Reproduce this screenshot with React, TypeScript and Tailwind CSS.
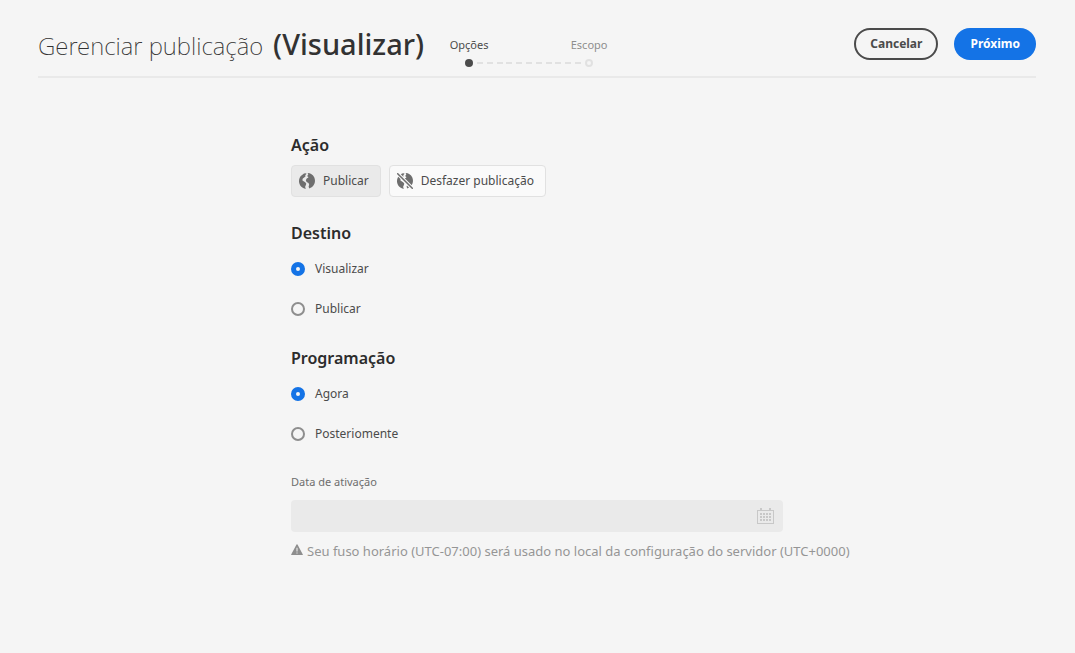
import { useId, useState, type ReactNode } from "react";

function Globe({ off = false }: { off?: boolean }) {
  const id = useId();
  return (
    <svg viewBox="0 0 16 16" className="size-4 shrink-0" aria-hidden="true">
      <defs>
        <mask id={id}>
          <rect width="16" height="16" fill="#fff" />
          {off && <path d="M-1 -1 L17 17" stroke="#000" strokeWidth="3.6" />}
        </mask>
      </defs>
      <g mask={`url(#${id})`} fill="#6e6e6e">
        <path d="M1.800 3 5 .6 6.500.2 7.600.7 6.200 2.300 6.600 3.300 5.200 4.600 3.800 5.600 3.300 7.300 4.600 8.200 6.300 9.200 7.300 10.800 6.800 12.300 6.200 13.400 6.300 14.600 6.800 15.900C3 15.400.3 12.500 0 8.800-.1 6.600.6 4.600 1.800 3z" />
        <path d="M8.600.1C11.500.2 14 1.900 15.200 4.300c.9 1.900 1 4 .4 5.900-.5 1.400-1.300 2.700-2.500 3.700L10.200 15.400 9.600 13.600 10.200 11.800 9.500 10 7.600 9 6.800 7.200 7.700 5.500 9.400 4.600 9 3.500 8 3.200 9.300 1.500z" />
      </g>
      {off && <path d="M.7.7 15.300 15.300" stroke="#6e6e6e" strokeWidth="1.500" strokeLinecap="round" />}
    </svg>
  );
}

function Calendar() {
  return (
    <svg viewBox="0 0 18 18" className="size-[18px]" fill="#c8c8c8" aria-hidden="true">
      <path fillRule="evenodd" d="M0 3h3V1h2v2h7V1h2v2h3v14H0zM1 4v12h15V4z" />
      {[6, 9, 12].map((y) =>
        [3, 6, 9, 12].map((x) => <rect key={`${x}-${y}`} x={x} y={y} width="2" height="2" />),
      )}
    </svg>
  );
}

function Warning() {
  return (
    <svg viewBox="0 0 12 12" className="mb-[2px] h-3 w-3 shrink-0" aria-hidden="true">
      <path d="M5.500.6a.6.6 0 0 1 1 0l5.200 9.600a.6.6 0 0 1-.5.900H.8a.6.6 0 0 1-.5-.900z" fill="#8e8e8e" />
      <path d="M5.500 3.700h1v3.700h-1zM5.500 8.400h1v1.200h-1z" fill="#f5f5f5" />
    </svg>
  );
}

function ActionButton({ selected, onClick, children, off }: { selected: boolean; onClick: () => void; children: ReactNode; off?: boolean }) {
  return (
    <button
      type="button"
      aria-pressed={selected}
      onClick={onClick}
      className={`flex h-8 items-center gap-2 rounded border border-[#e1e1e1] pr-[11px] pl-[7px] text-xs text-[#4b4b4b] ${selected ? "bg-[#eaeaea]" : "bg-[#fafafa]"}`}
    >
      <Globe off={off} />
      {children}
    </button>
  );
}

function RadioGroup({ title, name, options }: { title: string; name: string; options: string[] }) {
  return (
    <fieldset>
      <legend className="text-base leading-6 font-semibold text-[#2c2c2c]">{title}</legend>
      <div className="mt-1">
        {options.map((option, i) => (
          <label key={option} className="flex h-10 items-center gap-[10px] text-xs text-[#4b4b4b]">
            <input
              type="radio"
              name={name}
              defaultChecked={i === 0}
              className="size-[14px] appearance-none rounded-full border-2 border-[#8e8e8e] bg-[#f5f5f5] checked:border-[5px] checked:border-[#1473e6]"
            />
            {option}
          </label>
        ))}
      </div>
    </fieldset>
  );
}

export default function App() {
  const [action, setAction] = useState("publicar");
  return (
    <div className="min-h-screen bg-[#f5f5f5] pr-[39px] pl-[38px] font-['Noto_Sans',sans-serif]">
      <header className="flex h-[78px] items-start border-b-2 border-[#e9e9e9]">
        <h1 className="flex items-baseline gap-[10px] pt-6 leading-10 whitespace-nowrap text-[#323232]">
          <span className="text-2xl font-extralight">Gerenciar publicação</span>
          <span className="text-[29px] font-medium">(Visualizar)</span>
        </h1>
        <ol className="ml-[15px] flex pt-[37px] text-[11px] leading-4">
          <li className="flex w-[60px] flex-col items-center gap-[6px] text-[#4b4b4b]" aria-current="step">
            Opções
            <span className="size-2 rounded-full bg-[#4b4b4b]" />
          </li>
          <li className="-mx-[22px] flex w-[104px] items-end justify-between pb-[3px]" aria-hidden="true">
            {Array.from({ length: 11 }, (_, i) => (
              <span key={i} className="h-[2px] w-[6px] bg-[#e1e1e1]" />
            ))}
          </li>
          <li className="flex w-[60px] flex-col items-center gap-[6px] text-[#8e8e8e]">
            Escopo
            <span className="size-2 rounded-full border-2 border-[#e1e1e1]" />
          </li>
        </ol>
        <div className="ml-auto flex gap-4 pt-7 text-xs font-bold">
          <button type="button" className="h-8 rounded-full border-2 border-[#4b4b4b] px-[14px] text-[#4b4b4b]">Cancelar</button>
          <button type="button" className="h-8 rounded-full bg-[#1473e6] px-4 text-white">Próximo</button>
        </div>
      </header>

      <main className="mx-auto flex w-full max-w-[492px] flex-col pt-[55px]">
        <h2 className="text-base leading-6 font-semibold text-[#2c2c2c]">Ação</h2>
        <div className="mt-2 flex gap-2">
          <ActionButton selected={action === "publicar"} onClick={() => setAction("publicar")}>Publicar</ActionButton>
          <ActionButton off selected={action === "desfazer"} onClick={() => setAction("desfazer")}>Desfazer publicação</ActionButton>
        </div>
        <div className="mt-6 flex flex-col gap-[17px]">
          <RadioGroup title="Destino" name="destino" options={["Visualizar", "Publicar"]} />
          <RadioGroup title="Programação" name="programacao" options={["Agora", "Posteriomente"]} />
        </div>
        <label htmlFor="data" className="mt-5 text-[11px] leading-4 text-[#6e6e6e]">Data de ativação</label>
        <div className="mt-[10px] flex h-8 items-center rounded bg-[#eaeaea] pr-2">
          <input id="data" type="text" disabled className="h-8 min-w-0 flex-1 bg-transparent px-3 text-xs" />
          <button type="button" disabled aria-label="Calendário"><Calendar /></button>
        </div>
        <p className="mt-[7px] flex items-center gap-1 text-[13px] leading-6 whitespace-nowrap text-[#959595]">
          <Warning />
          Seu fuso horário (UTC-07:00) será usado no local da configuração do servidor (UTC+0000)
        </p>
      </main>
    </div>
  );
}
